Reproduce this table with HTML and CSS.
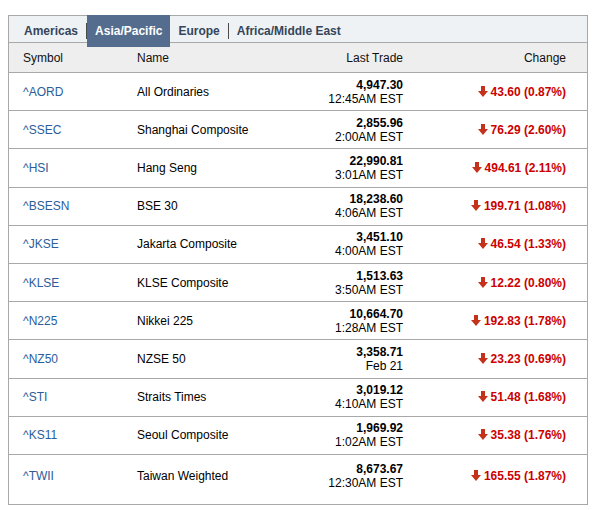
FILE: index.html
```html
<!DOCTYPE html>
<html>
<head>
<meta charset="utf-8">
<link rel="stylesheet" href="styles.css">
</head>
<body>
<div class="box">
  <div class="tabs">
    <span class="tab">Americas</span><span class="sep"></span><span class="tab active">Asia/Pacific</span><span class="tab">Europe</span><span class="sep"></span><span class="tab">Africa/Middle East</span>
  </div>
  <table class="quotes">
    <colgroup><col class="c1"><col class="c2"><col class="c3"><col class="c4"></colgroup>
    <thead>
      <tr><th class="h-sym">Symbol</th><th class="h-name">Name</th><th class="h-num">Last Trade</th><th class="h-chg">Change</th></tr>
    </thead>
    <tbody id="rows"></tbody>
  </table>
</div>
<script src="script.js"></script>
</body>
</html>
```
FILE: script.js
```js
const data = [
  ["^AORD","All Ordinaries","4,947.30","12:45AM EST","43.60 (0.87%)"],
  ["^SSEC","Shanghai Composite","2,855.96","2:00AM EST","76.29 (2.60%)"],
  ["^HSI","Hang Seng","22,990.81","3:01AM EST","494.61 (2.11%)"],
  ["^BSESN","BSE 30","18,238.60","4:06AM EST","199.71 (1.08%)"],
  ["^JKSE","Jakarta Composite","3,451.10","4:00AM EST","46.54 (1.33%)"],
  ["^KLSE","KLSE Composite","1,513.63","3:50AM EST","12.22 (0.80%)"],
  ["^N225","Nikkei 225","10,664.70","1:28AM EST","192.83 (1.78%)"],
  ["^NZ50","NZSE 50","3,358.71","Feb 21","23.23 (0.69%)"],
  ["^STI","Straits Times","3,019.12","4:10AM EST","51.48 (1.68%)"],
  ["^KS11","Seoul Composite","1,969.92","1:02AM EST","35.38 (1.76%)"],
  ["^TWII","Taiwan Weighted","8,673.67","12:30AM EST","165.55 (1.87%)"]
];
const arrow = '<svg class="arr" width="10" height="11" viewBox="0 0 10 11"><path d="M3 0H7V5H10L5 11L0 5H3Z" fill="#c4321b"/></svg>';
document.getElementById("rows").innerHTML = data.map(r =>
  `<tr><td class="sym"><a>${r[0]}</a></td><td class="name">${r[1]}</td><td class="num"><b>${r[2]}</b><br>${r[3]}</td><td class="chg">${arrow}<span>${r[4]}</span></td></tr>`
).join("");
```
FILE: styles.css
```css
body {
  margin: 15px 8px 8px 8px;
  font-family: "Liberation Sans", Arial, sans-serif;
  font-size: 12px;
  color: #000;
  background: #fff;
}
.box {
  width: 578px;
  border: 1px solid #a8a8a8;
  padding-bottom: 9px;
}
.tabs {
  display: flex;
  align-items: flex-start;
  height: 26px;
  background: #eef2f5;
  border-bottom: 1px solid #a8a8a8;
  padding-left: 7px;
}
.tab {
  padding: 8px 8px 4px;
  line-height: 14px;
  font-weight: bold;
  color: #36455a;
}
.tab.active {
  position: relative;
  z-index: 2;
  background: #546d8e;
  color: #fff;
  margin-top: -2px;
  padding: 10px 8px 9px;
}
.sep {
  width: 1px;
  height: 16px;
  margin-top: 7px;
  background: #4a4a4a;
}
.quotes {
  width: 578px;
  border-collapse: collapse;
  table-layout: fixed;
}
.c1 { width: 128px; }
.c2 { width: 170px; }
.c3 { width: 112px; }
.c4 { width: 168px; }
th {
  font-weight: normal;
  height: 29px;
  padding: 0;
  background: #eeeeee;
  border-bottom: 1px solid #a8a8a8;
  line-height: 14px;
  text-align: left;
  color: #111;
}
.h-sym { padding-left: 14px; }
.h-num { text-align: right; padding-right: 16px; }
.h-chg { text-align: right; padding-right: 21px; }
td {
  height: 37.2px;
  padding: 0;
  line-height: 14px;
  border-bottom: 1px solid #a8a8a8;
  vertical-align: middle;
}
tbody tr:last-child td {
  border-bottom: none;
  padding-top: 3px;
}
.sym { padding-left: 14px; }
.sym a { color: #2a5d9b; }
.num { text-align: right; padding-right: 16px; }
.num b { font-weight: bold; }
.chg { text-align: right; padding-right: 21px; color: #cc0000; font-weight: bold; }
.arr { vertical-align: -1px; margin-right: 3px; }
```
